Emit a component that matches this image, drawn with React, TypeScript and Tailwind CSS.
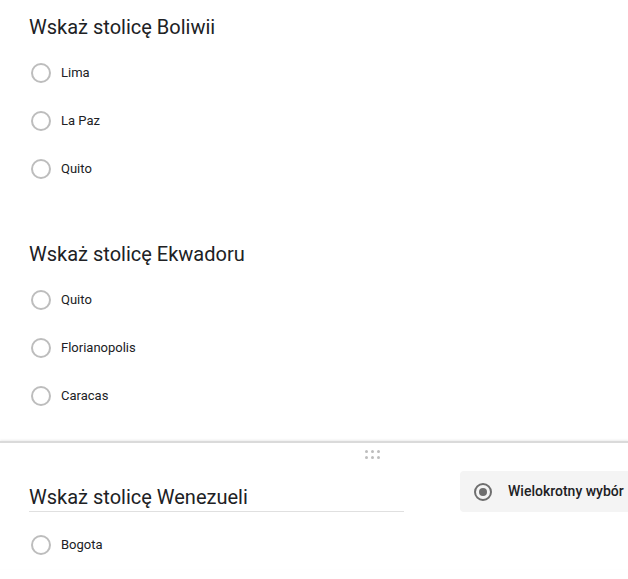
const font = { fontFamily: "Roboto, 'Noto Sans', sans-serif" };

function Radio({ label }: { label: string }) {
  return (
    <div className="flex h-12 items-center">
      <span className="ml-[2px] h-5 w-5 rounded-full border-2 border-[#bdbdbd]" />
      <span className="ml-[10px] text-[13px] text-[#202124]">{label}</span>
    </div>
  );
}

function Question({ title, options }: { title: string; options: string[] }) {
  return (
    <div>
      <h2 className="h-8 text-[20px] leading-8 text-[#202124]">{title}</h2>
      <div className="mt-[6px]">
        {options.map((o) => (
          <Radio key={o} label={o} />
        ))}
      </div>
    </div>
  );
}

export default function App() {
  return (
    <div className="h-[579px] w-[628px] overflow-hidden bg-white" style={font}>
      <div className="pl-[29px] pt-[11px]">
        <Question title="Wskaż stolicę Boliwii" options={["Lima", "La Paz", "Quito"]} />
        <div className="mt-[45px]">
          <Question title="Wskaż stolicę Ekwadoru" options={["Quito", "Florianopolis", "Caracas"]} />
        </div>
      </div>

      <div className="mt-[21px] border-t-2 border-[#dadada] shadow-[0_-1px_2px_rgba(0,0,0,0.08)]">
        <div className="flex h-[22px] items-center justify-center pl-[116px]">
          <div className="grid grid-cols-3 gap-[3px]">
            {Array.from({ length: 6 }).map((_, i) => (
              <span key={i} className="h-[3px] w-[3px] rounded-full bg-[#bdbdbd]" />
            ))}
          </div>
        </div>

        <div className="flex pl-[29px]">
          <div className="mt-[14px] h-[33px] w-[375px] border-b border-[#e0e0e0] pt-[3px]">
            <h2 className="text-[20px] leading-[30px] text-[#202124]">Wskaż stolicę Wenezueli</h2>
          </div>
          <div className="ml-[56px] mt-[6px] flex h-[41px] flex-1 items-center rounded-l-[4px] bg-[#f4f4f4] pl-[14px]">
            <span className="flex h-[18px] w-[18px] items-center justify-center rounded-full border-2 border-[#6e6e6e]">
              <span className="h-2 w-2 rounded-full bg-[#6e6e6e]" />
            </span>
            <span className="ml-[16px] text-[14px] font-medium text-[#202124]">Wielokrotny wybór</span>
          </div>
        </div>

        <div className="mt-[9px] pl-[29px]">
          <Radio label="Bogota" />
        </div>
      </div>
    </div>
  );
}
